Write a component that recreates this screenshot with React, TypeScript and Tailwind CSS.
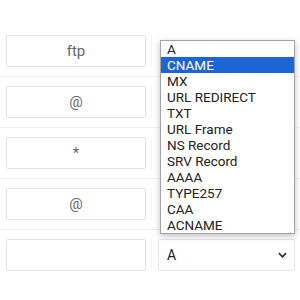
const rows = ['ftp', '@', '*', '@', ''];

const recordTypes = [
  'A',
  'CNAME',
  'MX',
  'URL REDIRECT',
  'TXT',
  'URL Frame',
  'NS Record',
  'SRV Record',
  'AAAA',
  'TYPE257',
  'CAA',
  'ACNAME',
];

function ChevronDown() {
  return (
    <svg width="9" height="6" viewBox="0 0 10 6" className="text-[#333]">
      <path d="M1 1l4 4 4-4" fill="none" stroke="currentColor" strokeWidth="2" />
    </svg>
  );
}

export default function App() {
  const selected = 'CNAME';

  return (
    <div
      className="relative w-[300px] h-[300px] bg-white overflow-hidden"
      style={{ fontFamily: 'Roboto, "Liberation Sans", sans-serif' }}
    >
      <div className="pt-[26px]">
        {rows.map((host, i) => (
          <div
            key={i}
            className={`flex items-center py-[9px] ${i < rows.length - 1 ? 'border-b border-[#f0f0f0]' : ''}`}
          >
            {/* Host */}
            <div className="w-[152px] pl-[6px] border-r border-[#f5f5f5]">
              <div className="w-[140px] h-[32px] flex items-center justify-center border border-[#e3e3e3] rounded-[2px] text-[15px] text-[#666]">
                {host}
              </div>
            </div>

            {/* Type */}
            <div className="pl-[6px]">
              {i === rows.length - 1 && (
                <div className="w-[137px] h-[32px] flex items-center justify-between pl-[8px] pr-[7px] border border-[#e6e6e6] rounded-[2px] text-[14px] text-[#222]">
                  <span>A</span>
                  <ChevronDown />
                </div>
              )}
            </div>
          </div>
        ))}
      </div>

      {/* Open dropdown */}
      <ul className="absolute left-[160px] top-[40px] w-[135px] bg-white border border-[#a3a3a3] shadow-[0_2px_6px_rgba(0,0,0,0.25)]">
        {recordTypes.map((t) => (
          <li
            key={t}
            className={`h-[16px] leading-[16px] pl-[6px] text-[13.5px] ${
              t === selected ? 'bg-[#1b65d4] text-white' : 'text-[#222]'
            }`}
          >
            {t}
          </li>
        ))}
      </ul>
    </div>
  );
}
